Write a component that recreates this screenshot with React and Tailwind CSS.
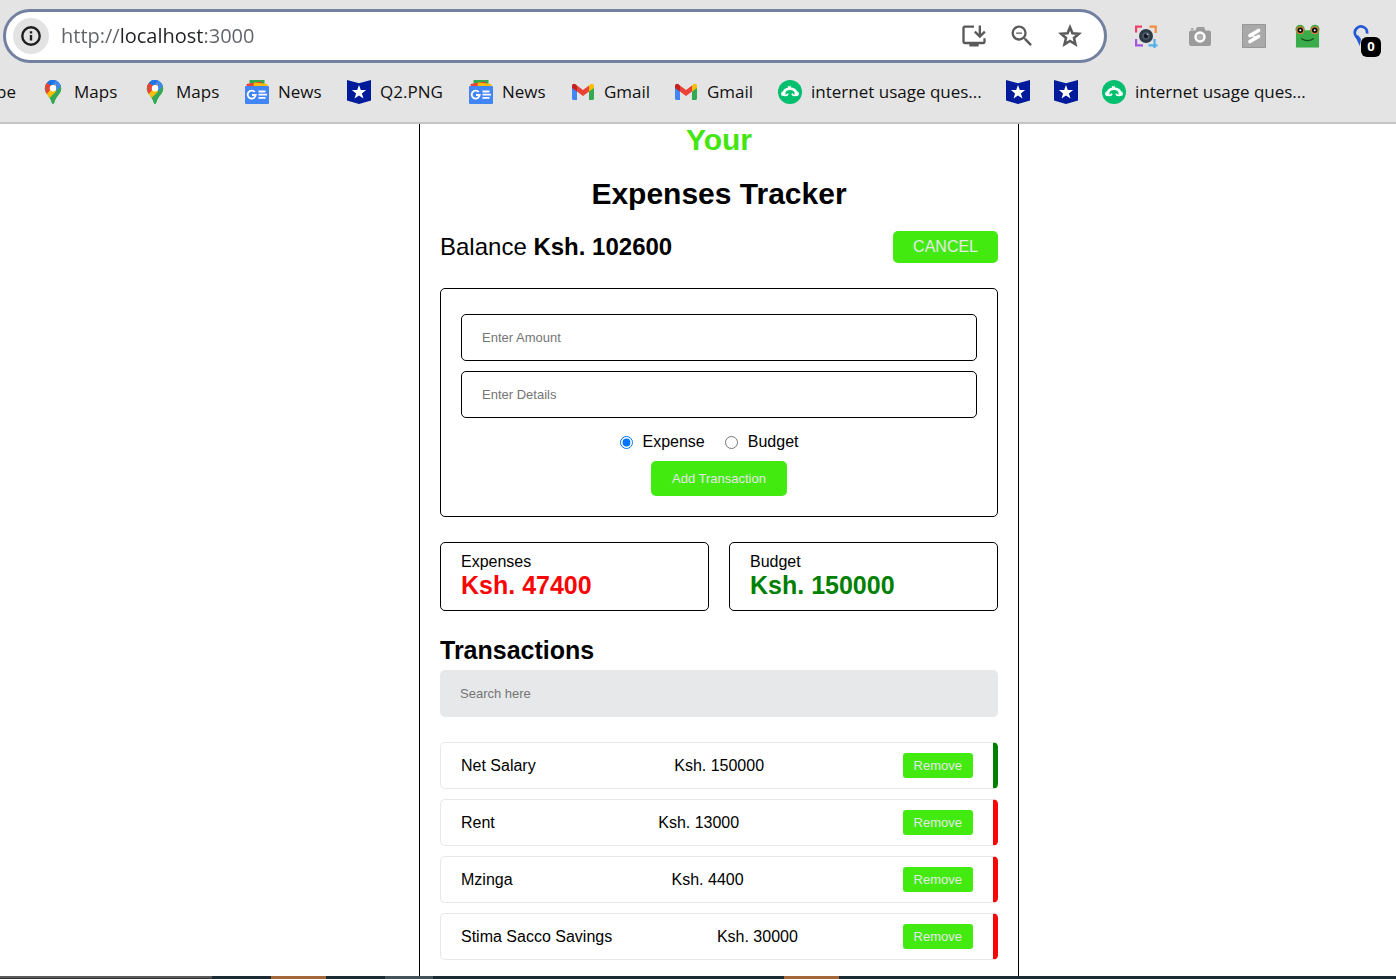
import { MdOutlineInstallDesktop, MdZoomOut } from "react-icons/md";

function InfoIcon() {
  return (
    <svg viewBox="0 0 20 20" className="size-5" fill="none" stroke="#1f1f1f" strokeWidth="2.400" aria-hidden="true">
      <circle cx="10" cy="10" r="8.700" />
      <path d="M10 9v5.600M10 5.200v2.300" />
    </svg>
  );
}

function StarIcon() {
  return (
    <svg viewBox="0 0 24 24" className="size-7" fill="none" stroke="currentColor" strokeWidth="2.200" aria-hidden="true">
      <path d="m12 4.600 2.100 5 5.500.5-4.200 3.600 1.300 5.400L12 16.200l-4.700 2.900 1.300-5.400-4.200-3.600 5.500-.5z" />
    </svg>
  );
}

function MapsIcon() {
  return (
    <svg viewBox="0 0 24 24" className="size-6" aria-hidden="true">
      <defs>
        <clipPath id="pin">
          <path d="M12 0a8.200 8.200 0 0 0-8.200 8.300c0 2.600 1.100 4.500 2.600 6.400 2 2.500 3.600 4.700 4.500 8.300.3 1.300 1.900 1.300 2.200 0 .9-3.600 2.500-5.800 4.500-8.300 1.500-1.900 2.600-3.800 2.600-6.400A8.200 8.200 0 0 0 12 0z" />
        </clipPath>
      </defs>
      <g clipPath="url(#pin)">
        <path d="M0 0h24v24H0z" fill="#34a853" />
        <path d="M3 0h18v5L12 9z" fill="#4285f4" />
        <path d="M5.700 3 3 0h9l3 .6L9.300 6z" fill="#1a73e8" />
        <path d="M2 11 9.300 5l-4-2.500L1 6z" fill="#ea4335" />
        <path d="m3.500 11 5.300-6.200 3 2.500-6.200 7.500z" fill="#ea4335" />
        <path d="m5.400 14.800 9-10.800 1.400 6.400-7.800 7.600z" fill="#fbbc04" />
        <path d="m14.700 10.400 4.400-6.200L24 9l-8 14-6 1-3.500-8z" fill="#34a853" />
        <path d="m5.600 14.500 3.200-3.800 6.500.5-7.300 7.300z" fill="#fbbc04" />
        <path d="m14.400 6.200 3.100-3.700 2.300 3.500-4.800 5.400z" fill="#4285f4" />
      </g>
      <circle cx="12" cy="8.300" r="3.200" fill="#fff" />
    </svg>
  );
}

function NewsIcon() {
  return (
    <svg viewBox="0 0 24 24" className="size-6" aria-hidden="true">
      <path d="M4.500 0h15v8h-15z" fill="#34a853" />
      <path d="m1.500 4 15-2.500 1.500 6H2z" fill="#ea4335" />
      <path d="m9 2.500 13.500 1.500L22 9H8z" fill="#fbbc04" />
      <rect y="6" width="24" height="18" rx="1" fill="#4285f4" />
      <path d="M9.800 12a4 4 0 1 0 .9 3H7" fill="none" stroke="#fff" strokeWidth="1.800" />
      <path d="M13.500 11.500h7M13.500 14.700h8.500M13.500 17.900h7" stroke="#fff" strokeWidth="1.800" />
    </svg>
  );
}

function ShieldIcon() {
  return (
    <svg viewBox="0 0 24 24" className="size-6" aria-hidden="true">
      <path d="m0 0 12 3.200L24 0v20.500L12 24 0 20.500z" fill="#001a9c" />
      <path d="m12 5 1.800 5 5.300.1-4.200 3.300 1.600 5.100L12 15.500l-4.500 3 1.600-5.100-4.200-3.300 5.300-.1z" fill="#fff" />
    </svg>
  );
}

function GmailIcon() {
  return (
    <svg viewBox="0 0 24 24" className="size-6" aria-hidden="true">
      <path d="M1 7v11.500C1 19.300 1.700 20 2.500 20H6V10z" fill="#4285f4" />
      <path d="M23 7v11.500c0 .8-.7 1.500-1.500 1.500H18V10z" fill="#34a853" />
      <path d="m6 5.500 6 4.600 6-4.600v6L12 16l-6-4.500z" fill="#ea4335" />
      <path d="M1 8V6c0-2 2.200-3 3.800-1.500L6 5.500v6z" fill="#c5221f" />
      <path d="M23 8V6c0-2-2.200-3-3.800-1.500L18 5.500v6z" fill="#fbbc04" />
    </svg>
  );
}

function SurveyIcon() {
  return (
    <svg viewBox="0 0 24 24" className="size-6" aria-hidden="true">
      <circle cx="12" cy="12" r="12" fill="#00bf6f" />
      <path d="M5.500 13.500a6.600 6 0 0 1 13 0" fill="none" stroke="#fff" strokeWidth="2.800" />
      <path d="M11.500 8.500c-.8-1.200-.8-1.700-1.500-2.200M12.200 8.500c.2-1 .1-2-.2-2.700" fill="none" stroke="#fff" strokeWidth="1.200" />
      <circle cx="5.300" cy="13.800" r="2.300" fill="#fff" />
      <circle cx="18.700" cy="13.800" r="2.300" fill="#fff" />
      <path d="M6 15.200c2 .6 3.400 0 4-1.600M18 15.200c-2 .6-3.400 0-4-1.600" fill="none" stroke="#fff" strokeWidth="1.600" />
    </svg>
  );
}

function CaptureIcon() {
  return (
    <svg viewBox="0 0 24 24" className="size-6" fill="none" strokeWidth="2.200" aria-hidden="true">
      <path d="M2.100 8.500V2.600H8" stroke="#f0406a" />
      <path d="M15.500 2.600h6.200V9" stroke="#f58b3c" />
      <path d="M2.100 15v6.400H9" stroke="#a655e0" />
      <path d="M14.500 21.400h9M20.500 15v9" stroke="#4fb0e8" />
      <circle cx="12" cy="12" r="7" fill="#2e3a46" />
      <circle cx="12" cy="12" r="3.800" fill="#4a5b6b" />
      <circle cx="12" cy="12" r="2.200" fill="#111820" />
      <circle cx="13.500" cy="10.300" r=".9" fill="#b9c7d3" />
    </svg>
  );
}

function CameraIcon() {
  return (
    <svg viewBox="0 0 24 24" className="size-6" aria-hidden="true">
      <path d="M3 6.500h4.500L9 3h7l1.500 3.500H21a2 2 0 0 1 2 2V20a2 2 0 0 1-2 2H3a2 2 0 0 1-2-2V8.500a2 2 0 0 1 2-2zM3 4.300h2.500v1.500H3z" fill="#9b9b9b" />
      <circle cx="12" cy="13" r="4.500" fill="#b0b0b0" stroke="#fff" strokeWidth="2.400" />
    </svg>
  );
}

function StripesIcon() {
  return (
    <svg viewBox="0 0 24 24" className="size-6" aria-hidden="true">
      <path d="M0 0h24v24H0z" fill="#a9a9a9" />
      <path d="M.5.500h23v23H.5z" fill="none" stroke="#989898" />
      <path d="M8 11.500 16.500 6.500M8 17.500l8.500-5" fill="none" stroke="#fff" strokeWidth="3.600" strokeLinecap="round" />
      <path d="m8.500 10.300 8 3-1 1.200-8-3z" fill="#fff" />
    </svg>
  );
}

function FrogIcon() {
  return (
    <svg viewBox="0 0 26 26" className="size-[26px]" aria-hidden="true">
      <circle cx="5.300" cy="6" r="4.800" fill="#3aac49" />
      <circle cx="20.700" cy="6" r="4.800" fill="#3aac49" />
      <path d="M1 7h24v18H1z" fill="#3aac49" />
      <circle cx="5.500" cy="7" r="4.200" fill="#d9803a" />
      <circle cx="20.500" cy="7" r="4.200" fill="#d9803a" />
      <circle cx="5.500" cy="7" r="2.900" fill="#0d0d0d" />
      <circle cx="20.500" cy="7" r="2.900" fill="#0d0d0d" />
      <circle cx="5.500" cy="7" r="1" fill="#fff" />
      <circle cx="20.500" cy="7" r="1" fill="#fff" />
      <path d="M6.500 15.500c4 2.700 9 2.700 13 0" fill="none" stroke="#174d1f" strokeWidth="1.300" />
    </svg>
  );
}

function LoopIcon() {
  return (
    <svg viewBox="0 0 16 22" className="h-[22px] w-4" aria-hidden="true">
      <path d="M4.500 12.600A6.100 6.100 0 1 1 14 8.500" fill="none" stroke="#2359d6" strokeWidth="2.800" />
      <path d="M2.500 12 5 10l3 4-1.200 7z" fill="#2359d6" />
    </svg>
  );
}

const bookmarks = [
  { label: "Maps", Icon: MapsIcon, width: "w-[102px]" },
  { label: "Maps", Icon: MapsIcon, width: "w-[102px]" },
  { label: "News", Icon: NewsIcon, width: "w-[102px]" },
  { label: "Q2.PNG", Icon: ShieldIcon, width: "w-[122px]" },
  { label: "News", Icon: NewsIcon, width: "w-[102px]" },
  { label: "Gmail", Icon: GmailIcon, width: "w-[103px]" },
  { label: "Gmail", Icon: GmailIcon, width: "w-[104px]" },
  { label: "internet usage ques...", Icon: SurveyIcon, width: "w-[228px]" },
  { label: "", Icon: ShieldIcon, width: "w-12" },
  { label: "", Icon: ShieldIcon, width: "w-12" },
  { label: "internet usage ques...", Icon: SurveyIcon, width: "w-[228px]" },
];

const extensions = [
  { name: "Capture", Icon: CaptureIcon },
  { name: "Camera", Icon: CameraIcon },
  { name: "Stripes", Icon: StripesIcon },
  { name: "Frog", Icon: FrogIcon },
];

const transactions = [
  { details: "Net Salary", amount: 150000, type: "budget" },
  { details: "Rent", amount: 13000, type: "expense" },
  { details: "Mzinga", amount: 4400, type: "expense" },
  { details: "Stima Sacco Savings", amount: 30000, type: "expense" },
];

function BrowserBar() {
  return (
    <header className="shrink-0 overflow-hidden border-b-2 border-[#c4c4c4] bg-[#e4e4e4] font-['Open_Sans','Noto_Sans',sans-serif]">
      <div className="flex items-center pt-[9px] pl-[3px]">
        <div className="flex h-[54px] min-w-0 flex-1 items-center rounded-full border-3 border-[#72819f] bg-white pr-5 pl-[7px]">
          <button aria-label="Site information" className="flex size-9 shrink-0 items-center justify-center rounded-full bg-[#e3e3e3]">
            <InfoIcon />
          </button>
          <input
            aria-label="Address"
            defaultValue="http://localhost:3000"
            className="ml-3 min-w-0 flex-1 bg-[linear-gradient(90deg,#5f6368_59px,#202124_59px,#202124_143px,#5f6368_143px)] bg-clip-text text-xl text-transparent outline-none"
          />
          <div className="flex items-center gap-5 text-[#5a5a5a]">
            <button aria-label="Install app"><MdOutlineInstallDesktop className="size-7" /></button>
            <button aria-label="Zoom out"><MdZoomOut className="size-7" /></button>
            <button aria-label="Bookmark this page"><StarIcon /></button>
          </div>
        </div>
        <div className="flex w-[289px] shrink-0 items-center gap-[29px] pl-[26px]">
          {extensions.map(({ name, Icon }) => (
            <button key={name} aria-label={name} className="flex w-[25px] justify-center">
              <Icon />
            </button>
          ))}
          <button aria-label="Tracker, 0 items" className="relative h-[22px] w-8 shrink-0 pl-1">
            <LoopIcon />
            <span className="absolute top-3 left-3 flex size-5 items-center justify-center rounded-md bg-black text-[13px] font-bold text-white">0</span>
          </button>
        </div>
      </div>
      <nav aria-label="Bookmarks" className="flex h-[59px] items-center pb-0.5 text-[17px] text-[#111111]">
        <a href="#pe" className="flex w-[41px] shrink-0">
          <span className="-ml-1">pe</span>
        </a>
        {bookmarks.map(({ label, Icon, width }, index) => (
          <a key={index} href="#bookmark" aria-label={label || "Bookmark"} className={`flex shrink-0 items-center gap-[9px] whitespace-nowrap ${width}`}>
            <Icon />
            {label && <span>{label}</span>}
          </a>
        ))}
      </nav>
    </header>
  );
}

function SummaryCard({ title, amount, color }) {
  return (
    <div className="flex-1 rounded-[5px] border border-black px-5 py-[10px]">
      <p className="leading-[18px]">{title}</p>
      <p className={`text-[25px] leading-[29px] font-bold ${color}`}>Ksh. {amount}</p>
    </div>
  );
}

function Tracker() {
  const field = "h-[47px] w-full rounded-[5px] px-5 text-[13px] outline-none placeholder:text-[#757575]";
  return (
    <section className="mx-auto h-full w-full max-w-[600px] border-x border-black px-5 font-['Liberation_Sans',Arial,sans-serif] text-base text-black">
      <h1 className="text-center text-[30px] font-bold">
        <span className="block leading-8 text-[#43e610]">Your</span>
        <span className="mt-5 block leading-9">Expenses Tracker</span>
      </h1>
      <div className="mt-[19px] flex items-center justify-between">
        <p className="text-2xl">Balance <b>Ksh. 102600</b></p>
        <button className="h-8 rounded-[5px] bg-[#43ea10] px-5 leading-[18px] text-[#e6e8e9]">CANCEL</button>
      </div>

      <form className="mt-[25px] flex flex-col items-center rounded-[5px] border border-black px-5 pt-[25px] pb-5" onSubmit={(event) => event.preventDefault()}>
        <input aria-label="Enter Amount" type="number" placeholder="Enter Amount" className={`${field} border border-black`} />
        <input aria-label="Enter Details" placeholder="Enter Details" className={`${field} mt-[10px] border border-black`} />
        <div className="mt-[15px] flex leading-[18px]">
          <label className="mr-5 flex items-center gap-[10px]">
            <input type="radio" name="type" defaultChecked className="size-[13px]" />
            Expense
          </label>
          <label className="mr-5 flex items-center gap-[10px]">
            <input type="radio" name="type" className="size-[13px]" />
            Budget
          </label>
        </div>
        <button className="mt-[10px] h-[35px] rounded-[5px] bg-[#43ea10] px-[21px] text-[13px] text-[#e6e8e9]">Add Transaction</button>
      </form>

      <div className="mt-[25px] flex gap-5">
        <SummaryCard title="Expenses" amount={47400} color="text-[#fa0505]" />
        <SummaryCard title="Budget" amount={150000} color="text-[#008000]" />
      </div>

      <h2 className="mt-[25px] text-[25px] leading-[29px] font-bold">Transactions</h2>
      <input aria-label="Search transactions" type="search" placeholder="Search here" className={`${field} mt-[5px] bg-[#e6e8e9]`} />

      <ul className="mt-[25px] flex flex-col gap-[10px]">
        {transactions.map(({ details, amount, type }) => (
          <li
            key={details}
            className={`flex h-[47px] items-center justify-between rounded-[5px] border border-r-[5px] border-[#e6e8e9] px-5 ${type === "budget" ? "border-r-[#008000]" : "border-r-[#fa0505]"}`}
          >
            <span>{details}</span>
            <span>Ksh. {amount}</span>
            <button className="h-[25px] rounded-[3px] bg-[#43ea10] px-[11px] text-[13px] text-[#e6e8e9]">Remove</button>
          </li>
        ))}
      </ul>
    </section>
  );
}

function Taskbar() {
  return (
    <footer className="flex h-[3px] shrink-0 bg-[#1b2b33]">
      <div className="w-[212px] border-t-2 border-[#5a5a5a] bg-[#333333]" />
      <div className="ml-[59px] w-[55px] bg-[#a4673a]" />
      <div className="ml-[59px] w-12 bg-[#435158]" />
      <div className="ml-[351px] w-[55px] bg-[#a4673a]" />
    </footer>
  );
}

export default function App() {
  return (
    <div className="flex h-screen flex-col overflow-hidden bg-white">
      <BrowserBar />
      <main className="min-h-0 flex-1 overflow-hidden pl-[42px]">
        <Tracker />
      </main>
      <Taskbar />
    </div>
  );
}
